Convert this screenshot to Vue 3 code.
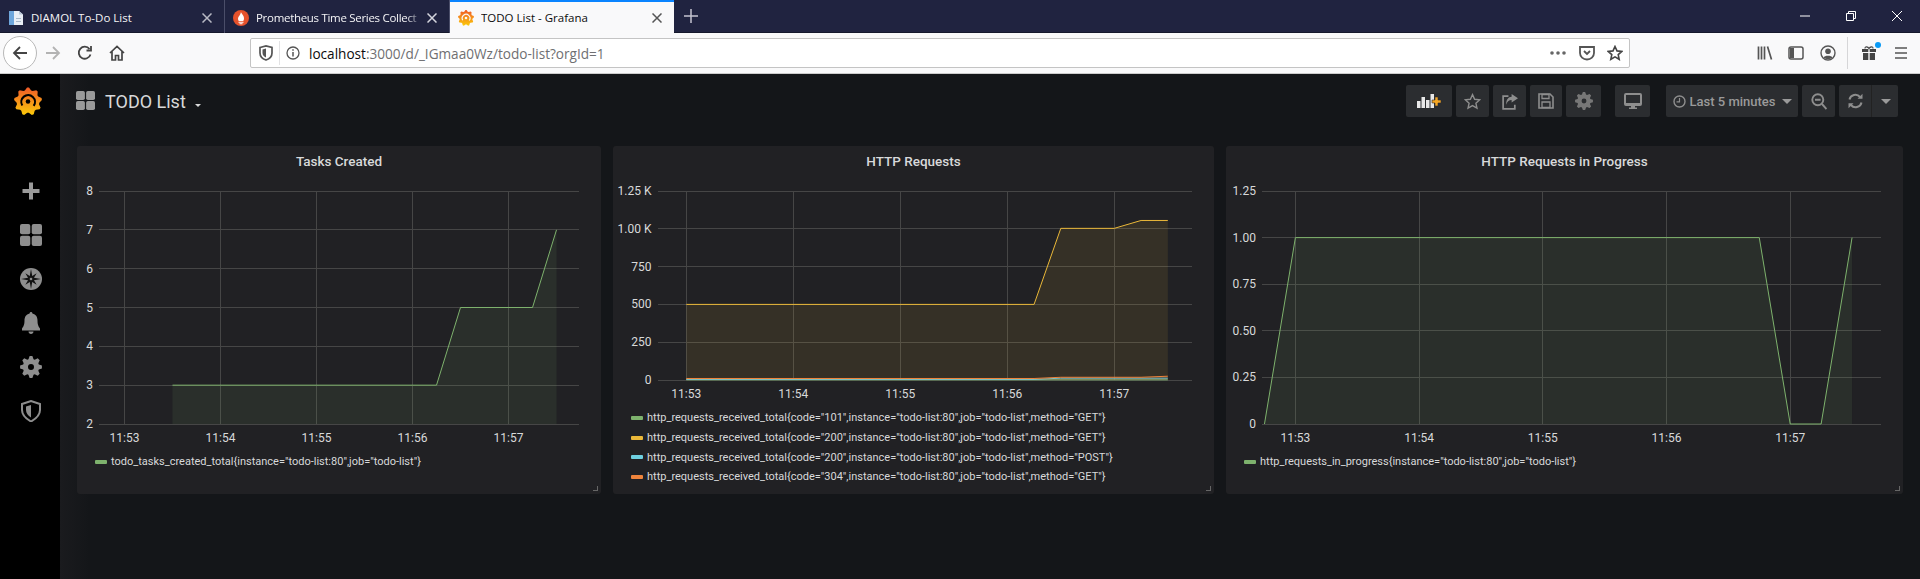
<template>
  <div class="app">
    <svg class="defs" width="0" height="0">
      <defs>
        <linearGradient id="flame" x1="0" y1="0" x2="0" y2="1">
          <stop offset="0" stop-color="#f05a28" />
          <stop offset="1" stop-color="#fbca0a" />
        </linearGradient>
      </defs>
    </svg>

    <div class="tabbar">
      <div class="tab">
        <svg class="favicon" viewBox="0 0 16 16">
          <path d="M1 1h10l4 3.500V15H1z" fill="#e9eef5" />
          <path d="M1 1h5v14H1z" fill="#6ea6dc" />
          <path d="M8 8h5v1H8zM8 11h5v1H8z" fill="#a9b8c9" />
          <path d="M11 1v3.500h4z" fill="#b9c7d8" />
        </svg>
        <span class="tab-text">DIAMOL To-Do List</span>
        <svg class="tab-close" width="10" height="10" viewBox="0 0 10 10"><path d="M.5.500l9 9M9.500.500l-9 9" stroke="#b8b9c4" stroke-width="1.500" /></svg>
      </div>
      <div class="tab tab-second">
        <svg class="favicon" viewBox="0 0 16 16">
          <circle cx="8" cy="8" r="8" fill="#e6522c" />
          <path d="M8 2c.4 2 3 3 3 6.500 0 1.300-.4 2-.8 2.500H5.800C5.400 10.500 5 9.800 5 8.500 5 6.500 7.600 5 8 2z" fill="#fff" />
          <path d="M5.500 11.700h5v1h-5zM6.500 13.200h3v1h-3z" fill="#fff" />
        </svg>
        <span class="tab-text tab-fade">Prometheus Time Series Collect</span>
        <svg class="tab-close" width="10" height="10" viewBox="0 0 10 10"><path d="M.5.500l9 9M9.500.500l-9 9" stroke="#d5d6de" stroke-width="1.500" /></svg>
      </div>
      <div class="tab tab-active">
        <svg class="favicon" viewBox="0 0 32 32">
          <path :d="logoGear" fill="url(#flame)" />
          <path d="M9.500 20.500A7.800 7.800 0 1 1 22.500 21" fill="none" stroke="#f9f9fa" stroke-width="2.400" />
          <circle cx="16" cy="16" r="2.600" fill="#f9f9fa" />
        </svg>
        <span class="tab-text">TODO List - Grafana</span>
        <svg class="tab-close" width="10" height="10" viewBox="0 0 10 10"><path d="M.5.500l9 9M9.500.500l-9 9" stroke="#555" stroke-width="1.500" /></svg>
      </div>
      <div class="new-tab">
        <svg width="16" height="16" viewBox="0 0 16 16"><path d="M8 1v14M1 8h14" stroke="#c3c4cf" stroke-width="1.500" /></svg>
      </div>
      <div class="window-controls">
        <div class="win-btn"><svg width="12" height="12" viewBox="0 0 12 12"><path d="M1 6h10" stroke="#fff" /></svg></div>
        <div class="win-btn"><svg width="12" height="12" viewBox="0 0 12 12"><path d="M1.500 3.500h7v7h-7zM3.500 3V1.500h7v7H9" fill="none" stroke="#fff" /></svg></div>
        <div class="win-btn"><svg width="12" height="12" viewBox="0 0 12 12"><path d="M1 1l10 10M11 1L1 11" stroke="#fff" /></svg></div>
      </div>
    </div>

    <div class="navbar">
      <div class="nav-left">
        <div class="back-btn">
          <svg width="16" height="16" viewBox="0 0 16 16"><path d="M15 8H2M8 2L2 8l6 6" fill="none" stroke="#444" stroke-width="1.800" /></svg>
        </div>
        <div class="nav-btn">
          <svg width="16" height="16" viewBox="0 0 16 16"><path d="M1 8h13M8 2l6 6-6 6" fill="none" stroke="#b3b3b3" stroke-width="1.800" /></svg>
        </div>
        <div class="nav-btn">
          <svg width="16" height="16" viewBox="0 0 16 16"><path d="M13.500 9.500A6 6 0 1 1 12.500 4M14 1v4.500H9.500" fill="none" stroke="#444" stroke-width="1.800" /></svg>
        </div>
        <div class="nav-btn">
          <svg width="16" height="16" viewBox="0 0 16 16"><path d="M1 8l7-6.500L15 8M3 6.500V15h3.500v-4.500h3V15H13V6.500" fill="none" stroke="#444" stroke-width="1.700" /></svg>
        </div>
      </div>
      <div class="urlbar">
        <svg class="url-shield" width="14" height="16" viewBox="0 0 14 16"><path d="M1 2.500L7 1l6 1.500V8c0 3.500-3 6-6 7-3-1-6-3.500-6-7z" fill="none" stroke="#555" stroke-width="1.700" /><path d="M7 3.500v9C5 11.500 3.500 10 3.500 8V4.500z" fill="#555" /></svg>
        <span class="url-divider"></span>
        <svg class="url-info" width="14" height="14" viewBox="0 0 14 14"><circle cx="7" cy="7" r="6" fill="none" stroke="#555" stroke-width="1.300" /><path d="M7 6v4.500M7 3.300v1.500" stroke="#555" stroke-width="1.500" /></svg>
        <span class="url-text"><b>localhost</b>:3000/d/_IGmaa0Wz/todo-list?orgId=1</span>
        <div class="url-actions">
          <svg width="18" height="6" viewBox="0 0 18 6"><circle cx="3" cy="3" r="1.800" fill="#666" /><circle cx="9" cy="3" r="1.800" fill="#666" /><circle cx="15" cy="3" r="1.800" fill="#666" /></svg>
          <svg width="16" height="16" viewBox="0 0 16 16"><path d="M1 2h14v6a7 6.500 0 0 1-14 0z" fill="none" stroke="#555" stroke-width="1.800" /><path d="M5 6l3 3 3-3" fill="none" stroke="#555" stroke-width="1.800" /></svg>
          <svg width="16" height="16" viewBox="0 0 16 16"><path d="M8 1.500l2 4.400 4.800.5-3.600 3.200 1 4.700L8 11.900l-4.200 2.400 1-4.700L1.200 6.400 6 5.900z" fill="none" stroke="#444" stroke-width="1.600" /></svg>
        </div>
      </div>
      <div class="nav-right">
        <div class="nav-tool">
          <svg width="16" height="16" viewBox="0 0 16 16"><path d="M1.500 1.500v13M4.500 1.500v13M7.500 1.500v13M10.500 1.500l4 13" stroke="#555" stroke-width="1.700" /></svg>
        </div>
        <div class="nav-tool">
          <svg width="16" height="16" viewBox="0 0 16 16"><rect x="1" y="2" width="14" height="12" rx="2" fill="none" stroke="#555" stroke-width="1.500" /><path d="M2 3h4v10H2z" fill="#555" /></svg>
        </div>
        <div class="nav-tool">
          <svg width="16" height="16" viewBox="0 0 16 16"><circle cx="8" cy="8" r="7" fill="none" stroke="#555" stroke-width="1.400" /><circle cx="8" cy="6.200" r="2.800" fill="#555" /><path d="M3.500 12.500c1-2.500 8-2.500 9 0-2 2-7 2-9 0z" fill="#555" /></svg>
        </div>
        <span class="nav-sep"></span>
        <div class="nav-tool nav-gift">
          <svg width="16" height="16" viewBox="0 0 16 16"><path d="M1 4h6.300v3H1zM8.700 4H15v3H8.700zM2 8h5.300v7H2zM8.700 8H14v7H8.700z" fill="#444" /><path d="M4 3.500C4 1 7 1.500 8 3.500c1-2 4-2.500 4 0" fill="none" stroke="#444" stroke-width="1.200" /></svg>
          <span class="gift-dot"></span>
        </div>
        <div class="nav-tool">
          <svg width="14" height="14" viewBox="0 0 14 14"><path d="M1 2h12M1 7h12M1 12h12" stroke="#555" stroke-width="1.600" /></svg>
        </div>
      </div>
    </div>

    <div class="grafana">
      <aside class="sidemenu">
        <svg class="side-logo" width="28" height="29" viewBox="0 0 32 32">
          <path :d="logoGear" fill="url(#flame)" />
          <path d="M9.500 20.500A7.800 7.800 0 1 1 22.500 21" fill="none" stroke="#000" stroke-width="2.400" />
          <circle cx="16" cy="16" r="2.600" fill="#000" />
        </svg>
        <div class="side-icons">
          <svg width="22" height="22" viewBox="0 0 22 22"><path d="M9 2.500h4V9h6.500v4H13v6.500H9V13H2.500V9H9z" fill="#9a9a9a" /></svg>
          <svg width="22" height="22" viewBox="0 0 22 22">
            <rect x="0" y="0" width="10.300" height="10.300" rx="2" fill="#8e8e8e" />
            <rect x="11.700" y="0" width="10.300" height="10.300" rx="2" fill="#8e8e8e" />
            <rect x="0" y="11.700" width="10.300" height="10.300" rx="2" fill="#8e8e8e" />
            <rect x="11.700" y="11.700" width="10.300" height="10.300" rx="2" fill="#8e8e8e" />
          </svg>
          <svg width="22" height="22" viewBox="0 0 22 22">
            <circle cx="11" cy="11" r="11" fill="#8e8e8e" />
            <polygon :points="compassStar" fill="#111" />
            <circle cx="11" cy="11" r="1.300" fill="#8e8e8e" />
          </svg>
          <svg width="22" height="22" viewBox="0 0 22 22">
            <path d="M11 0c.8 0 1.300.6 1.400 1.400C16 2.200 17.500 5 17.500 8.500c0 5 1.500 6.500 2.500 8v2H2v-2c1-1.500 2.500-3 2.500-8C4.500 5 6 2.200 9.600 1.400 9.700.6 10.200 0 11 0z" fill="#8e8e8e" />
            <path d="M8.500 19.500h5c0 1.500-1.100 2.500-2.500 2.500s-2.500-1-2.500-2.500z" fill="#8e8e8e" />
          </svg>
          <svg width="22" height="22" viewBox="0 0 22 22"><path :d="sideGear" fill="#8e8e8e" fill-rule="evenodd" /></svg>
          <svg width="22" height="22" viewBox="0 0 22 22">
            <path d="M2 4l9-3 9 3v6c0 5-4.500 9-9 11.500C6.500 19 2 15 2 10z" fill="none" stroke="#8e8e8e" stroke-width="2" />
            <path d="M11 5v12.500C8 15.500 6 13 6 10V6.500z" fill="#8e8e8e" />
          </svg>
        </div>
      </aside>

      <main class="dashboard">
        <header class="dash-header">
          <svg class="dash-icon" width="19" height="19" viewBox="0 0 22 22">
            <rect x="0" y="0" width="10.300" height="10.300" rx="2" fill="#9a9a9a" />
            <rect x="11.700" y="0" width="10.300" height="10.300" rx="2" fill="#9a9a9a" />
            <rect x="0" y="11.700" width="10.300" height="10.300" rx="2" fill="#9a9a9a" />
            <rect x="11.700" y="11.700" width="10.300" height="10.300" rx="2" fill="#9a9a9a" />
          </svg>
          <span class="dash-title">TODO List</span>
          <span class="dash-caret"></span>

          <div class="dash-actions">
            <button class="btn btn-add">
              <svg width="26" height="18" viewBox="0 0 26 18">
                <path d="M1 9h3.500v7H1zM5.500 5h3.500v11H5.500zM10 8h3.500v8H10zM14.500 2H18v14h-3.500z" fill="#e8e8e8" />
                <path d="M19 5h3v3h3v3h-3v3h-3v-3h-3V8h3z" fill="#f5a623" stroke="#2b2d30" stroke-width=".6" />
              </svg>
            </button>
            <button class="btn btn-star">
              <svg width="17" height="17" viewBox="0 0 16 16"><path d="M8 1.500l2 4.400 4.800.5-3.600 3.200 1 4.700L8 11.900l-4.200 2.400 1-4.700L1.200 6.400 6 5.900z" fill="none" stroke="#8e8e8e" stroke-width="1.300" /></svg>
            </button>
            <button class="btn btn-share">
              <svg width="17" height="17" viewBox="0 0 16 16"><path d="M7 3H2v12h11v-4" fill="none" stroke="#8e8e8e" stroke-width="1.600" /><path d="M10 1l6 4-6 4V6.500C7.500 6.500 5.500 8 5 11 4.500 6.500 7 3.500 10 3.500z" fill="#8e8e8e" /></svg>
            </button>
            <button class="btn btn-save">
              <svg width="16" height="16" viewBox="0 0 16 16"><path d="M1 1h11l3 3v11H1z" fill="none" stroke="#8e8e8e" stroke-width="1.600" /><path d="M4 1.500h7v4H4zM4 9h8v5.500H4z" fill="none" stroke="#8e8e8e" stroke-width="1.300" /></svg>
            </button>
            <button class="btn btn-gear">
              <svg width="18" height="18" viewBox="0 0 22 22"><path :d="sideGear" fill="#777" fill-rule="evenodd" /></svg>
            </button>
            <button class="btn btn-tv">
              <svg width="18" height="16" viewBox="0 0 18 16"><path d="M2 0h14a2 2 0 0 1 2 2v9a2 2 0 0 1-2 2h-5v1.500h2V16H5v-1.500h2V13H2a2 2 0 0 1-2-2V2a2 2 0 0 1 2-2zm0 2v8h14V2z" fill="#8e8e8e" fill-rule="evenodd" /></svg>
            </button>
            <button class="btn btn-time">
              <svg width="13" height="13" viewBox="0 0 13 13"><circle cx="6.500" cy="6.500" r="5.500" fill="none" stroke="#8e8e8e" stroke-width="1.400" /><path d="M6.500 3v3.800H3.500" fill="none" stroke="#8e8e8e" stroke-width="1.200" /></svg>
              <span>Last 5 minutes</span>
              <span class="caret"></span>
            </button>
            <button class="btn btn-zoom">
              <svg width="16" height="17" viewBox="0 0 16 17"><circle cx="6.800" cy="6.800" r="5.500" fill="none" stroke="#8e8e8e" stroke-width="1.900" /><path d="M11 11l4.500 5M4 6.800h5.600" stroke="#8e8e8e" stroke-width="1.900" /></svg>
            </button>
            <button class="btn btn-refresh">
              <svg width="15" height="16" viewBox="0 0 15 16"><path d="M1.500 6.500A6 6 0 0 1 12 4M13.500 9.500A6 6 0 0 1 3 12" fill="none" stroke="#8e8e8e" stroke-width="2" /><path d="M14.500.8v5H9.500zM.5 15.200v-5h5z" fill="#8e8e8e" /></svg>
            </button>
            <button class="btn btn-more"><span class="caret"></span></button>
          </div>
        </header>

        <section class="panels">
          <article v-for="panel in panels" :key="panel.title" class="panel" :style="{ width: panel.width + 'px' }">
            <h2 class="panel-title">{{ panel.title }}</h2>
            <svg class="chart" :width="panel.width" :height="panel.plotHeight + 45">
              <line v-for="tick in panel.yTicks" :key="tick.label" class="grid-line" :x1="panel.gridLeft" :x2="panel.gridRight" :y1="yAt(panel, tick.value)" :y2="yAt(panel, tick.value)" />
              <line v-for="m in minutes" :key="m" class="grid-line" :x1="xAt(panel, m)" :x2="xAt(panel, m)" :y1="17" :y2="17 + panel.plotHeight" />
              <template v-for="s in panel.series" :key="s.color">
                <path :d="areaPath(panel, s.points)" :fill="s.color" fill-opacity="0.1" />
                <path :d="linePath(panel, s.points)" :stroke="s.color" fill="none" stroke-width="1" />
              </template>
              <text v-for="tick in panel.yTicks" :key="tick.label" class="tick" text-anchor="end" :x="panel.gridLeft - 6" :y="yAt(panel, tick.value) + 4">{{ tick.label }}</text>
              <text v-for="m in minutes" :key="m" class="tick" text-anchor="middle" :x="xAt(panel, m)" :y="panel.plotHeight + 35">11:{{ m }}</text>
            </svg>
            <ul class="legend">
              <li v-for="item in panel.legend" :key="item.text" class="legend-row">
                <span class="legend-swatch" :style="{ background: item.color }"></span>
                <span class="legend-text">{{ item.text }}</span>
              </li>
            </ul>
            <span class="resize-handle"></span>
          </article>
        </section>
      </main>
    </div>
  </div>
</template>

<script setup>
const GREEN = '#7eb26d'
const YELLOW = '#eab839'
const CYAN = '#6ed0e0'
const ORANGE = '#ef843c'

const minutes = [53, 54, 55, 56, 57]

const panels = [
  {
    title: 'Tasks Created',
    width: 524,
    gridLeft: 22,
    gridRight: 502,
    x0: 47.5,
    dx: 96,
    plotHeight: 233,
    min: 2,
    max: 8,
    yTicks: [2, 3, 4, 5, 6, 7, 8].map((v) => ({ value: v, label: String(v) })),
    series: [
      { color: GREEN, points: [[53.5, 3], [56.25, 3], [56.5, 5], [57.25, 5], [57.5, 7]] }
    ],
    legend: [{ color: GREEN, text: 'todo_tasks_created_total{instance="todo-list:80",job="todo-list"}' }]
  },
  {
    title: 'HTTP Requests',
    width: 601,
    gridLeft: 44.5,
    gridRight: 579,
    x0: 73.3,
    dx: 107,
    plotHeight: 189,
    min: 0,
    max: 1250,
    yTicks: [
      { value: 0, label: '0' },
      { value: 250, label: '250' },
      { value: 500, label: '500' },
      { value: 750, label: '750' },
      { value: 1000, label: '1.00 K' },
      { value: 1250, label: '1.25 K' }
    ],
    series: [
      { color: GREEN, points: [[53, 1], [57.5, 1]] },
      { color: YELLOW, points: [[53, 500], [56.25, 500], [56.5, 1003], [57, 1003], [57.25, 1055], [57.5, 1055]] },
      { color: CYAN, points: [[53, 4], [56.25, 4], [56.5, 12], [57.5, 12]] },
      { color: ORANGE, points: [[53, 10], [56.25, 10], [56.5, 18], [57.25, 18], [57.5, 25]] }
    ],
    legend: [
      { color: GREEN, text: 'http_requests_received_total{code="101",instance="todo-list:80",job="todo-list",method="GET"}' },
      { color: YELLOW, text: 'http_requests_received_total{code="200",instance="todo-list:80",job="todo-list",method="GET"}' },
      { color: CYAN, text: 'http_requests_received_total{code="200",instance="todo-list:80",job="todo-list",method="POST"}' },
      { color: ORANGE, text: 'http_requests_received_total{code="304",instance="todo-list:80",job="todo-list",method="GET"}' }
    ]
  },
  {
    title: 'HTTP Requests in Progress',
    width: 677,
    gridLeft: 36,
    gridRight: 655,
    x0: 69.4,
    dx: 123.7,
    plotHeight: 233,
    min: 0,
    max: 1.25,
    yTicks: [
      { value: 0, label: '0' },
      { value: 0.25, label: '0.25' },
      { value: 0.5, label: '0.50' },
      { value: 0.75, label: '0.75' },
      { value: 1, label: '1.00' },
      { value: 1.25, label: '1.25' }
    ],
    series: [
      { color: GREEN, points: [[52.75, 0], [53, 1], [56.75, 1], [57, 0], [57.25, 0], [57.5, 1]] }
    ],
    legend: [{ color: GREEN, text: 'http_requests_in_progress{instance="todo-list:80",job="todo-list"}' }]
  }
]

const xAt = (panel, minute) => panel.x0 + (minute - 53) * panel.dx
const yAt = (panel, value) => 17 + ((panel.max - value) / (panel.max - panel.min)) * panel.plotHeight

const linePath = (panel, points) =>
  points.map(([m, v], i) => `${i ? 'L' : 'M'}${xAt(panel, m)} ${yAt(panel, v)}`).join(' ')

const areaPath = (panel, points) => {
  const bottom = 17 + panel.plotHeight
  const first = xAt(panel, points[0][0])
  const last = xAt(panel, points[points.length - 1][0])
  return `${linePath(panel, points)} L${last} ${bottom} L${first} ${bottom} Z`
}

// gear outline, with a round hole when asked, used by the logo and the settings icons
const gearPath = (cx, cy, teeth, outer, inner, hole = 0, tip = 0.16) => {
  const step = (Math.PI * 2) / teeth
  const pts = []
  for (let i = 0; i < teeth; i++) {
    const a = i * step
    pts.push([a - step * 0.4, inner], [a - step * tip, outer], [a + step * tip, outer], [a + step * 0.4, inner])
  }
  const d = pts
    .map(([a, r], i) => `${i ? 'L' : 'M'}${(cx + r * Math.sin(a)).toFixed(2)} ${(cy - r * Math.cos(a)).toFixed(2)}`)
    .join(' ')
  if (!hole) return `${d} Z`
  return `${d} Z M${cx - hole} ${cy} a${hole} ${hole} 0 1 0 ${hole * 2} 0 a${hole} ${hole} 0 1 0 ${-hole * 2} 0 Z`
}

const logoGear = gearPath(16, 16, 9, 16, 13, 0, 0.1)
const sideGear = gearPath(11, 11, 8, 11, 8.2, 3)

const compassStar = Array.from({ length: 16 }, (_, i) => {
  const r = i % 4 === 0 ? 10 : i % 2 === 0 ? 8 : 3.2
  const a = (i * Math.PI) / 8
  return `${(11 + r * Math.sin(a)).toFixed(2)},${(11 - r * Math.cos(a)).toFixed(2)}`
}).join(' ')
</script>

<style scoped>
.app {
  width: 1920px;
  height: 579px;
  overflow: hidden;
  display: flex;
  flex-direction: column;
  background: #141619;
}

.defs {
  position: absolute;
}

/* browser chrome */
.tabbar {
  height: 33px;
  flex: none;
  display: flex;
  background: #202340;
  border-bottom: 1px solid #15182c;
  box-sizing: border-box;
}

.tab {
  width: 225px;
  height: 33px;
  box-sizing: border-box;
  padding: 2px 12px 0 8px;
  display: flex;
  align-items: center;
  font: 11.500px "Open Sans", sans-serif;
  color: #f4f4f6;
  border-right: 1px solid #4b4e69;
}

.tab-active {
  width: 224px;
  background: #f9f9fa;
  color: #0c0c0d;
  border-top: 2px solid #0a84ff;
  border-right: none;
  padding-top: 0;
}

.favicon {
  width: 16px;
  height: 16px;
  flex: none;
  margin-right: 7px;
}

.tab-text {
  white-space: nowrap;
  overflow: hidden;
  flex: 1;
}

.tab-fade {
  letter-spacing: -0.3px;
  -webkit-mask-image: linear-gradient(to right, #000 90%, transparent 100%);
  mask-image: linear-gradient(to right, #000 90%, transparent 100%);
}

.tab-close {
  flex: none;
  margin-left: 4px;
}

.new-tab {
  width: 34px;
  display: flex;
  align-items: center;
  justify-content: center;
}

.window-controls {
  margin-left: auto;
  display: flex;
}

.win-btn {
  width: 46px;
  display: flex;
  align-items: center;
  justify-content: center;
}

.navbar {
  height: 41px;
  flex: none;
  box-sizing: border-box;
  display: flex;
  align-items: center;
  background: #f9f9fa;
  border-bottom: 1px solid #ccc;
}

.nav-left {
  width: 250px;
  flex: none;
  display: flex;
  align-items: center;
  padding-left: 3px;
  box-sizing: border-box;
}

.back-btn {
  width: 34px;
  height: 34px;
  box-sizing: border-box;
  border: 1px solid #b8b8b8;
  border-radius: 50%;
  background: #fff;
  display: flex;
  align-items: center;
  justify-content: center;
}

.nav-btn {
  width: 32px;
  display: flex;
  justify-content: center;
}

.urlbar {
  width: 1380px;
  height: 30px;
  flex: none;
  box-sizing: border-box;
  background: #fff;
  border: 1px solid #c4c4c4;
  border-radius: 2px;
  display: flex;
  align-items: center;
  padding: 0 6px 0 8px;
}

.url-divider {
  width: 1px;
  height: 24px;
  background: #e2e2e4;
  margin: 0 6px;
}

.url-info {
  margin-right: 9px;
}

.url-text {
  font: 13.600px "Open Sans", sans-serif;
  color: #6f6f72;
}

.url-text b {
  font-weight: 400;
  color: #0c0c0d;
}

.url-actions {
  margin-left: auto;
  display: flex;
  align-items: center;
  gap: 12px;
}

.nav-right {
  flex: 1;
  display: flex;
  align-items: center;
  padding-left: 119px;
}

.nav-tool {
  width: 31.500px;
  display: flex;
  justify-content: center;
  position: relative;
}

.nav-sep {
  width: 1px;
  height: 32px;
  background: #d6d6d8;
  margin: 0 5px 0 3.500px;
}

.nav-gift {
  width: 32px;
}

.gift-dot {
  position: absolute;
  top: -3px;
  right: 4px;
  width: 6px;
  height: 6px;
  border-radius: 50%;
  background: #0a9af5;
}

/* grafana */
.grafana {
  flex: 1;
  min-height: 0;
  display: flex;
}

.sidemenu {
  width: 60px;
  flex: none;
  background: #000;
  display: flex;
  flex-direction: column;
  align-items: center;
}

.side-logo {
  margin-top: 13px;
  margin-left: -4px;
}

.side-icons {
  margin-top: 64px;
  display: flex;
  flex-direction: column;
  gap: 22px;
  margin-left: 2px;
}

.dashboard {
  flex: 1;
  min-width: 0;
  background: linear-gradient(to right, #1a1b1e, #141619 30px);
}

.dash-header {
  height: 72px;
  box-sizing: border-box;
  padding: 11px 22px 0 16px;
  display: flex;
  align-items: flex-start;
}

.dash-icon {
  margin-top: 6px;
  margin-right: 10px;
}

.dash-title {
  font: 18px/34px Roboto, sans-serif;
  color: #d8d9da;
}

.dash-caret {
  margin: 19px 0 0 9px;
  border-left: 3.500px solid transparent;
  border-right: 3.500px solid transparent;
  border-top: 3.500px solid #d8d9da;
}

.dash-actions {
  margin-left: auto;
  display: flex;
}

.btn {
  height: 32px;
  box-sizing: border-box;
  padding: 0;
  border: none;
  border-radius: 2px;
  background: #2b2d30;
  display: flex;
  align-items: center;
  justify-content: center;
  font: 500 13px Roboto, sans-serif;
  color: #9a9a9a;
}

.btn-add { width: 46px; }
.btn-star { width: 33px; margin-left: 4px; }
.btn-share { width: 33px; margin-left: 4px; }
.btn-save { width: 32px; margin-left: 4px; }
.btn-gear { width: 35px; margin-left: 4px; }
.btn-tv { width: 35px; margin-left: 14px; }
.btn-time { width: 132px; margin-left: 16px; gap: 4px; }
.btn-zoom { width: 33px; margin-left: 4px; }
.btn-refresh { width: 32px; margin-left: 4px; border-radius: 2px 0 0 2px; }
.btn-more { width: 27px; border-left: 1px solid #222; border-radius: 0 2px 2px 0; }

.caret {
  border-left: 5px solid transparent;
  border-right: 5px solid transparent;
  border-top: 5px solid #9a9a9a;
  margin-left: 2px;
}

.panels {
  display: flex;
  gap: 12px;
  padding-left: 17px;
}

.panel {
  height: 348px;
  position: relative;
  flex: none;
  background: #212124;
  border-radius: 3px;
  display: flex;
  flex-direction: column;
}

.panel-title {
  height: 28px;
  margin: 0;
  text-align: center;
  font: 500 13.500px/30px Roboto, sans-serif;
  color: #d8d9da;
}

.chart {
  display: block;
  flex: none;
}

.grid-line {
  stroke: #464646;
  stroke-width: 1;
  shape-rendering: crispEdges;
}

.tick {
  font: 12px Roboto, sans-serif;
  fill: #d8d9da;
}

.legend {
  list-style: none;
  margin: 0;
  padding: 0 0 0 18px;
}

.legend-row {
  height: 19.700px;
  display: flex;
  align-items: center;
  font: 11px Roboto, sans-serif;
  color: #d8d9da;
  white-space: nowrap;
}

.legend-swatch {
  width: 12px;
  height: 4px;
  border-radius: 1px;
  margin-right: 4px;
}

.resize-handle {
  position: absolute;
  right: 3px;
  bottom: 3px;
  width: 4px;
  height: 4px;
  border-right: 1px solid #666;
  border-bottom: 1px solid #666;
}
</style>

<style>
html,
body {
  background: #141619;
  overflow: hidden;
}
</style>
